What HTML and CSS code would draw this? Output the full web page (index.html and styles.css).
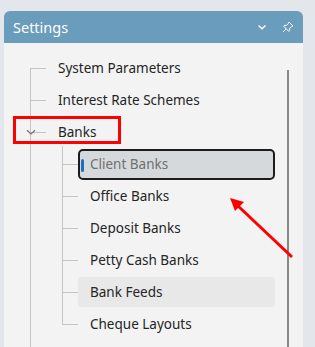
FILE: index.html
```html
<!DOCTYPE html>
<html lang="en">
<head>
  <meta charset="UTF-8">
  <title>Settings</title>
  <link rel="stylesheet" href="styles.css">
</head>
<body>

  <div class="panel">
    <div class="panel-head">
      <span class="title">Settings</span>
      <span class="head-icons">
        <svg width="10" height="10" viewBox="0 0 10 10"><path d="M1.5 3.5 L5 6.8 L8.5 3.5" fill="none" stroke="#fff" stroke-width="1.3"/></svg>
        <svg width="12" height="12" viewBox="0 0 12 12"><path d="M7 1 L11 5 L9.6 5.6 L7.6 7.6 L7.6 9.6 L6.8 10.4 L1.6 5.2 L2.4 4.4 L4.4 4.4 L6.4 2.4 Z M4 8 L1 11" fill="none" stroke="#fff" stroke-width="1" stroke-linejoin="round"/></svg>
      </span>
    </div>

    <div class="panel-body">
      <ul class="tree">
        <li><div class="row"><span class="label">System Parameters</span></div></li>
        <li><div class="row"><span class="label">Interest Rate Schemes</span></div></li>
        <li>
          <div class="row open">
            <svg class="caret" width="10" height="7" viewBox="0 0 10 7"><path d="M1 1.2 L5 5 L9 1.2" fill="none" stroke="#80705f" stroke-width="1.2"/></svg>
            <span class="label">Banks</span>
          </div>
          <ul class="sub">
            <li><div class="row"><span class="item selected">Client Banks</span></div></li>
            <li><div class="row"><span class="item">Office Banks</span></div></li>
            <li><div class="row"><span class="item">Deposit Banks</span></div></li>
            <li><div class="row"><span class="item">Petty Cash Banks</span></div></li>
            <li><div class="row"><span class="item hover">Bank Feeds</span></div></li>
            <li><div class="row"><span class="item">Cheque Layouts</span></div></li>
          </ul>
        </li>
      </ul>

      <div class="scrollbar"></div>
      <div class="mark"></div>
      <svg class="arrow" width="299" height="304" viewBox="0 0 299 304">
        <line x1="288" y1="214" x2="233" y2="162" stroke="#ff0000" stroke-width="3"/>
        <path d="M226 155 L240 159 L231 168 Z" fill="#ff0000"/>
      </svg>
    </div>
  </div>

</body>
</html>
```

FILE: styles.css
```css
body {
  margin: 0;
  padding: 11px 12px 0 4px;
  background-color: #e3e7eb;
  font-family: "Noto Sans", "Open Sans", sans-serif;
  height: 347px;
  box-sizing: border-box;
  overflow: hidden;
}
.panel { width: 299px; }
.panel-head {
  height: 32px;
  background-color: #6a9cbc;
  border-radius: 6px 6px 0 0;
  display: flex; align-items: center; justify-content: space-between;
  padding: 0 9px 0 9px;
  color: #fff;
}
.title { font-size: 14.5px; }
.head-icons { display: flex; align-items: center; gap: 15px; }
.head-icons svg { display: block; }

.panel-body {
  position: relative;
  height: 304px;
  background-color: #f3f3f3;
  padding-top: 9px;
  box-sizing: border-box;
  overflow: hidden;
  font-size: 13.5px;
  color: #242424;
}
.tree, .sub { list-style: none; margin: 0; position: relative; }
.tree { padding: 0 0 0 26px; }
.tree::before {
  content: ""; position: absolute; left: 26px; top: 16px; bottom: -200px;
  border-left: 1px solid #c4c4c4;
}
.sub { padding: 0 0 0 32px; }
.sub::before {
  content: ""; position: absolute; left: 32px; top: -2px; bottom: 16px;
  border-left: 1px solid #c4c4c4;
}
.row { display: flex; align-items: center; height: 32px; position: relative; }
.row::before {
  content: ""; width: 16px; flex: none;
  border-top: 1px solid #c4c4c4;
}
.label { margin-left: 12px; }
.caret { position: absolute; left: -4px; top: 13px; }

.item {
  width: 197px; height: 30px;
  box-sizing: border-box;
  display: flex; align-items: center;
  padding-left: 12px;
  border-radius: 4px;
  position: relative;
}
.item.hover { background-color: #e8e8e8; }
.item.selected {
  height: 31px;
  background-color: #d6d9dc;
  border: 2px solid #1c1c1c;
  border-radius: 5px;
  padding-left: 10px;
  color: #6f6f6f;
}
.item.selected::before {
  content: ""; position: absolute; left: 1px; top: 8px;
  width: 3px; height: 13px; border-radius: 2px;
  background-color: #1f6fc0;
}

.scrollbar {
  position: absolute; left: 283px; top: 27px; bottom: 0;
  width: 2px; background-color: #878787;
}
.mark {
  position: absolute; left: 9px; top: 73px;
  width: 108px; height: 28px; box-sizing: border-box;
  border: 3px solid #ff0000;
}
.arrow { position: absolute; left: 0; top: 0; }
```
